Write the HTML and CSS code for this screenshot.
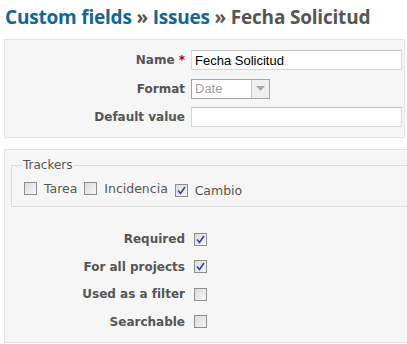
FILE: index.html
```html
<!DOCTYPE html>
<html lang="es">
<head>
    <meta charset="UTF-8">
    <title>Custom fields - Fecha Solicitud</title>
    <link rel="stylesheet" href="styles.css">
</head>
<body>
    <h2><a href="#">Custom fields</a> &raquo; <a href="#">Issues</a> &raquo; Fecha Solicitud</h2>

    <div class="box">
        <div class="row">
            <label class="field-label">Name <span class="required">*</span></label>
            <input class="text" type="text" value="Fecha Solicitud">
        </div>
        <div class="row">
            <label class="field-label">Format</label>
            <div class="select disabled">
                <span class="select-value">Date</span>
                <span class="select-arrow">
                    <svg width="9" height="5" viewBox="0 0 9 5"><path d="M0 0h9L4.5 5z" fill="#a8a8a8"/></svg>
                </span>
            </div>
        </div>
        <div class="row">
            <label class="field-label">Default value</label>
            <input class="text" type="text" value="">
        </div>
    </div>

    <div class="box wide">
        <fieldset class="trackers">
            <legend>Trackers</legend>
            <label class="tracker"><span class="cb"></span> Tarea</label>
            <label class="tracker"><span class="cb"></span> Incidencia</label>
            <label class="tracker"><span class="cb checked"><svg width="9" height="9" viewBox="0 0 9 9"><path d="M1 4.5l2.5 3L8 1" fill="none" stroke="#33439a" stroke-width="1.6"/></svg></span> Cambio</label>
        </fieldset>

        <div class="flags">
            <div class="row check-row">
                <label class="field-label">Required</label>
                <span class="cb checked"><svg width="9" height="9" viewBox="0 0 9 9"><path d="M1 4.5l2.5 3L8 1" fill="none" stroke="#33439a" stroke-width="1.6"/></svg></span>
            </div>
            <div class="row check-row">
                <label class="field-label">For all projects</label>
                <span class="cb checked"><svg width="9" height="9" viewBox="0 0 9 9"><path d="M1 4.5l2.5 3L8 1" fill="none" stroke="#33439a" stroke-width="1.6"/></svg></span>
            </div>
            <div class="row check-row">
                <label class="field-label">Used as a filter</label>
                <span class="cb"></span>
            </div>
            <div class="row check-row">
                <label class="field-label">Searchable</label>
                <span class="cb"></span>
            </div>
        </div>
    </div>
</body>
</html>
```

FILE: styles.css
```css
html {
    overflow: hidden;
}

body {
    font-family: 'DejaVu Sans', Verdana, sans-serif;
    font-size: 12px;
    color: #555;
    background: #fff;
    margin: 0;
    padding: 0 2px 0 4px;
}

h2 {
    font-family: 'Open Sans', 'DejaVu Sans', sans-serif;
    font-size: 19px;
    font-weight: bold;
    color: #555;
    margin: 0;
    padding: 4px 0 0 1px;
    height: 39px;
    box-sizing: border-box;
    white-space: nowrap;
    letter-spacing: -0.2px;
}

h2 a {
    color: #169;
    text-decoration: none;
}

.box {
    background: #f6f6f6;
    border: 1px solid #e4e4e4;
    padding: 10px 2px 10px 0;
    display: flex;
    flex-direction: column;
    gap: 8.5px;
}

.box.wide {
    margin-top: 11px;
    margin-right: -20px;
    padding: 8px 0 0 6px;
    gap: 0;
}

.row {
    display: flex;
    align-items: center;
    height: 20px;
}

.field-label {
    width: 180px;
    text-align: right;
    font-weight: bold;
    color: #555;
    flex-shrink: 0;
}

.required {
    color: #b00;
}

.text {
    margin-left: 6px;
    flex: 1;
    height: 20px;
    box-sizing: border-box;
    border: 1px solid #d7d7d7;
    border-top-color: #c4c4c4;
    background: #fff;
    padding: 0 3px;
    font-family: 'Liberation Sans', Arial, sans-serif;
    font-size: 13px;
    color: #000;
}

.select {
    margin-left: 6px;
    width: 79px;
    height: 20px;
    box-sizing: border-box;
    border: 1px solid #a5a5a5;
    background: #fff;
    display: flex;
    align-items: stretch;
}

.select-value {
    flex: 1;
    padding-left: 3px;
    font-family: 'Liberation Sans', Arial, sans-serif;
    font-size: 13px;
    color: #a0a0a0;
    line-height: 18px;
}

.select-arrow {
    width: 17px;
    border-left: 1px solid #c8c8c8;
    background: #f0f0f0;
    display: flex;
    align-items: center;
    justify-content: center;
}

.trackers {
    margin: 0;
    border: 1px solid #dcdcdc;
    padding: 9px 0 8px 12px;
}

.trackers legend {
    padding: 0 1px;
    margin-left: -2px;
    color: #555;
    font-size: 12px;
}

.tracker {
    display: inline-flex;
    align-items: center;
    gap: 7px;
    margin-right: 3px;
    color: #555;
    font-size: 12.5px;
}

.cb {
    width: 13px;
    height: 13px;
    box-sizing: border-box;
    border: 1px solid #8e8e8e;
    background: linear-gradient(135deg, #dcdcdc, #f6f6f6);
    display: inline-flex;
    align-items: center;
    justify-content: center;
    flex-shrink: 0;
}

.flags {
    padding: 22px 0 10px;
    margin-left: -6px;
    display: flex;
    flex-direction: column;
    gap: 7.5px;
}

.check-row .cb {
    margin-left: 9px;
}
```
